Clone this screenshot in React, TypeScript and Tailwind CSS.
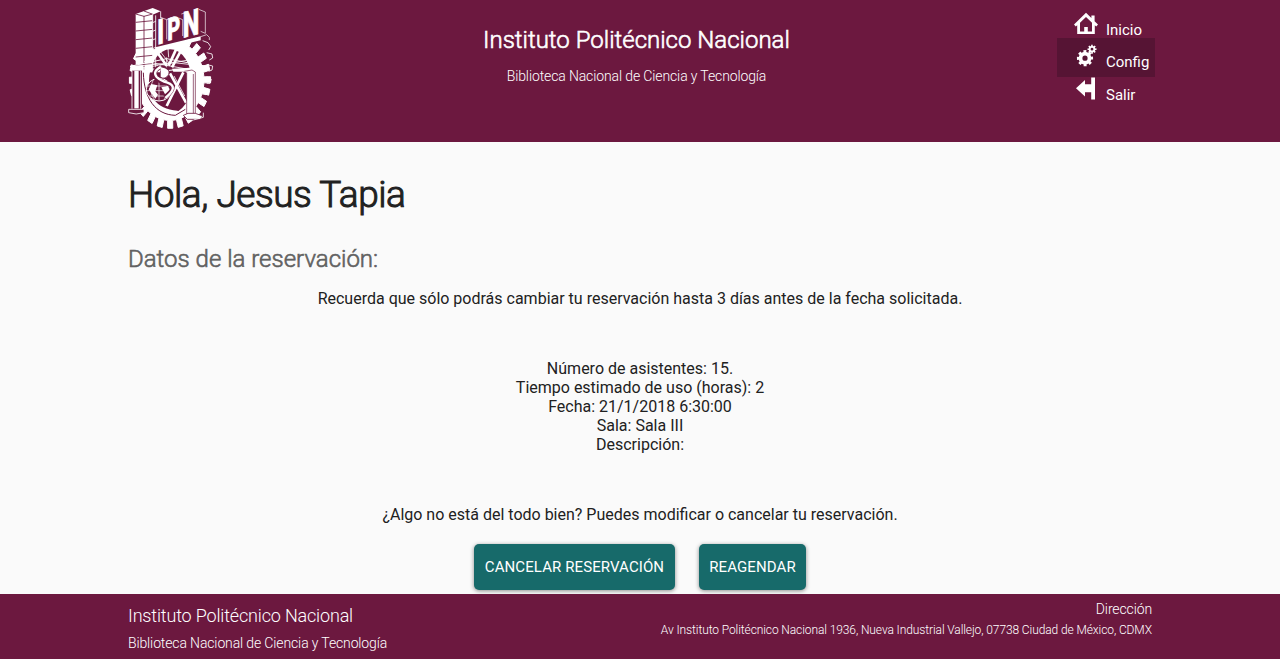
function gearPath(cx: number, cy: number, root: number, tip: number, teeth: number, stretch = 1) {
  const pts: string[] = [];
  const step = (Math.PI * 2) / teeth;
  for (let i = 0; i < teeth; i++) {
    const corners: [number, number][] = [
      [root, -0.3],
      [tip, -0.26],
      [tip, 0.22],
      [root, 0.27],
    ];
    for (const [r, o] of corners) {
      const t = (i + o) * step;
      pts.push(`${(cx + r * Math.cos(t)).toFixed(1)} ${(cy + r * stretch * Math.sin(t)).toFixed(1)}`);
    }
  }
  return `M${pts.join("L")}Z`;
}

const MAROON = "#6c183f";

function Logo() {
  return (
    <svg className="block h-[124px] w-[86px] overflow-visible" viewBox="12 12 258 372" fill="none" role="img" aria-label="IPN">
      {/* cog wheel */}
      <path d={gearPath(138, 228, 102, 122, 24, 1.19)} fill="#fff" stroke="#fff" strokeWidth="3" />
      <path d="M236 110L252 116L260 128L254 138M248 146L264 150L266 162L256 168M250 182L266 186L264 198L254 202M248 218L262 226L258 238L248 238M238 250L252 262L246 272L234 270" stroke="#fff" strokeWidth="2.5" />
      <ellipse cx="139" cy="232" rx="64" ry="96" fill={MAROON} />
      <path d="M0 0H246V92L90 136L35 108H0Z" fill={MAROON} />
      {/* spokes */}
      <path d="M93 136L128 185M160 128L134 185M174 134L144 190M178 205L128 306M138 208L186 296" stroke="#fff" strokeWidth="8" />
      <path d="M104 136L136 178M132 133L134 160M150 216L182 276M170 222L140 284" stroke="#fff" strokeWidth="2.5" />
      {/* tower */}
      <path d="M35 30L86 12L110 22L86 32V205H35Z" fill="#fff" />
      <path d="M35 30L60 37L86 30M60 36V205M35 55L86 50M35 81L86 76M35 107L86 102M35 133L86 128M35 159L86 154M35 184L86 179M60 21L84 30" stroke={MAROON} strokeWidth="2.5" />
      <path d="M86 32V205M95 34V190M110 22V42M86 56L95 52M86 82L95 78M86 108L95 104M86 134L95 130" stroke="#fff" strokeWidth="2.5" />
      {/* lettering */}
      <g fill="#fff" stroke="#fff" fontFamily="Roboto, sans-serif" fontWeight="900">
        <text transform="translate(99 123) skewY(-15) scale(.68 1)" fontSize="106" strokeWidth="1">I</text>
        <text transform="translate(130 111) skewY(-15) scale(.64 1)" fontSize="94" strokeWidth="2">P</text>
        <text transform="translate(176 102) skewY(-15) scale(.65 1)" fontSize="108" strokeWidth="2">N</text>
      </g>
      <path d="M110 40L128 47V106M128 47L150 38L160 43M164 42L176 47V96M172 30L192 24M224 16L244 24V88L230 82M230 98L248 92L256 100V108" stroke="#fff" strokeWidth="2" />
      <path d="M94 130L230 97V109L94 141Z" fill="#fff" />
      {/* roof */}
      <path d="M18 187L128 164L248 187L128 200Z" stroke="#fff" strokeWidth="3" />
      <path d="M18 188L150 176L248 187M35 196L205 166M60 172L205 198M128 160V190" stroke="#fff" strokeWidth="2.5" />
      <path d="M52 196H108V205H52ZM144 194L208 191L218 203H148Z" fill="#fff" />
      {/* left pillar */}
      <path d="M24 200H54V315H24Z" fill={MAROON} />
      <path d="M31 200H44V313H31Z" fill="#fff" />
      <path d="M24 200V314M50 200V314" stroke="#fff" strokeWidth="2.5" />
      <path d="M14 316H60V326Q36 334 14 326Z" fill={MAROON} stroke="#fff" strokeWidth="2.5" />
      {/* sweeping arch */}
      <path d="M54 200H66C68 276 96 314 160 320L184 336L150 346C84 344 54 286 54 200Z" fill="#fff" />
      <path d="M58 206C60 284 94 332 154 334L184 316" stroke={MAROON} strokeWidth="3" />
      {/* right pillar */}
      <path d="M181 202L204 198L214 204V338H188V206" fill="#fff" stroke={MAROON} strokeWidth="2" />
      <path d="M208 210V330" stroke={MAROON} strokeWidth="2" />
      <path d="M178 334L192 328H214L236 336L228 346H190Z" fill="#fff" stroke={MAROON} strokeWidth="2.5" />
      <path d="M208 348L238 340V326" stroke="#fff" strokeWidth="2.5" />
      {/* globe */}
      <ellipse cx="105" cy="257" rx="38" ry="34" fill={MAROON} stroke="#fff" strokeWidth="3" />
      <path d="M70 246H140M68 260H142M76 276H134M105 224V290M88 228Q70 258 92 288M124 228Q138 258 120 288" stroke="#fff" strokeWidth="2" />
      <path d="M82 240L100 244L94 262L102 272L94 284L82 268L74 256ZM112 250L132 246L138 258L124 272Z" fill="#fff" />
      {/* serpent */}
      <path d="M108 190Q82 202 96 221Q110 235 130 238Q164 248 122 280" stroke={MAROON} strokeWidth="13" />
      <path d="M112 188Q84 202 98 219Q110 231 130 236Q166 248 124 282" stroke="#fff" strokeWidth="7" />
      <path d="M110 188Q142 194 134 212Q124 228 110 220" fill="#fff" stroke={MAROON} strokeWidth="2.5" />
    </svg>
  );
}

function HomeIcon() {
  return (
    <svg className="h-6 w-6" viewBox="0 0 24 24" fill="#fff">
      <path fillRule="evenodd" d="M12 .8L0 12.5L1.8 14.5L3.2 13.2V22H20.8V13.2L22.2 14.5L24 12.5L20.6 9.2V3.5H17.4V6ZM12 5L18 10.8V19.5H13.8V15H10.2V19.5H6V10.8Z" />
    </svg>
  );
}

function GearsIcon() {
  return (
    <svg className="h-6 w-6" viewBox="0 0 24 24" fill="#fff" fillRule="evenodd">
      <path d={gearPath(11, 14.2, 6.4, 8.2, 8) + "M8.4 14.2a2.6 2.6 0 1 0 5.2 0a2.6 2.6 0 1 0-5.2 0Z"} />
      <path d={gearPath(18, 5.2, 3.4, 4.6, 8) + "M16.6 5.2a1.4 1.4 0 1 0 2.8 0a1.4 1.4 0 1 0-2.8 0Z"} />
    </svg>
  );
}

function ExitIcon() {
  return (
    <svg className="h-6 w-6" viewBox="0 0 24 24" fill="#fff">
      <path d="M2 11.2L11 3V7.2H17.2V.6H21V22.5H17.2V15.2H11V19.4Z" />
    </svg>
  );
}

export default function App() {
  return (
    <div className="flex h-[659px] flex-col overflow-hidden bg-[#fafafa] font-['Roboto',sans-serif] text-[#212121] antialiased">
      <header className="grid h-[142px] shrink-0 grid-cols-[340px_1fr_340px] bg-[#6c183f] px-32 pt-2 text-white">
        <Logo />
        <div className="pt-4 text-center">
          <h1 className="-ml-[7px] text-2xl leading-8 font-light whitespace-nowrap [-webkit-text-stroke:0.6px_white]">Instituto Politécnico Nacional</h1>
          <p className="mt-2 -ml-[7px] text-sm leading-6 font-light tracking-[-0.12px]">Biblioteca Nacional de Ciencia y Tecnología</p>
        </div>
        <nav className="-mr-[3px] flex w-[98px] flex-col justify-self-end text-[15px] leading-5">
          <a className="flex h-[30px] items-start gap-2 pt-1 pl-[17px]"><HomeIcon /><span className="pt-2">Inicio</span></a>
          <a className="flex h-[39px] items-start gap-2 bg-[#561434] pt-1.5 pl-[17px]"><GearsIcon /><span className="pt-2">Config</span></a>
          <a className="flex h-8 items-start gap-2 pl-[17px]"><ExitIcon /><span className="pt-2">Salir</span></a>
        </nav>
      </header>
      <main className="h-[452px] shrink-0 px-32 pt-7">
        <h2 className="text-[37px] leading-[50px] font-light tracking-[-0.47px] [-webkit-text-stroke:1px_#212121]">Hola, Jesus Tapia</h2>
        <h3 className="mt-[23px] text-2xl leading-8 font-light text-[#616161] [-webkit-text-stroke:0.6px_#616161]">Datos de la reservación:</h3>
        <div className="text-center text-base leading-[19px]">
          <p className="mt-[14px]">Recuerda que sólo podrás cambiar tu reservación hasta 3 días antes de la fecha solicitada.</p>
          <div className="mt-[51px]">
            <p>Número de asistentes: 15.</p>
            <p>Tiempo estimado de uso (horas): 2</p>
            <p>Fecha: 21/1/2018 6:30:00</p>
            <p>Sala: Sala III</p>
            <p>Descripción:</p>
          </div>
          <p className="mt-[51px]">¿Algo no está del todo bien? Puedes modificar o cancelar tu reservación.</p>
        </div>
        <div className="mt-5 flex justify-center gap-6 text-[15px] tracking-[0.1px] text-white">
          <button className="h-[46px] w-[201px] rounded-[5px] bg-[#176a6a] shadow-[0_1px_4px_rgba(0,0,0,.45)]">CANCELAR RESERVACIÓN</button>
          <button className="h-[46px] w-[107px] rounded-[5px] bg-[#176a6a] shadow-[0_1px_4px_rgba(0,0,0,.45)]">REAGENDAR</button>
        </div>
      </main>
      <footer className="flex h-[65px] shrink-0 justify-between bg-[#6c183f] px-32 font-light text-white">
        <div className="pt-2.5">
          <p className="text-lg leading-6 tracking-[-0.17px]">Instituto Politécnico Nacional</p>
          <p className="mt-[3px] text-sm leading-6 tracking-[-0.13px]">Biblioteca Nacional de Ciencia y Tecnología</p>
        </div>
        <div className="pt-[5px] text-right">
          <p className="text-sm leading-5 tracking-[-0.12px]">Dirección</p>
          <p className="text-xs leading-[22px] tracking-[-0.1px]">Av Instituto Politécnico Nacional 1936, Nueva Industrial Vallejo, 07738 Ciudad de México, CDMX</p>
        </div>
      </footer>
    </div>
  );
}
